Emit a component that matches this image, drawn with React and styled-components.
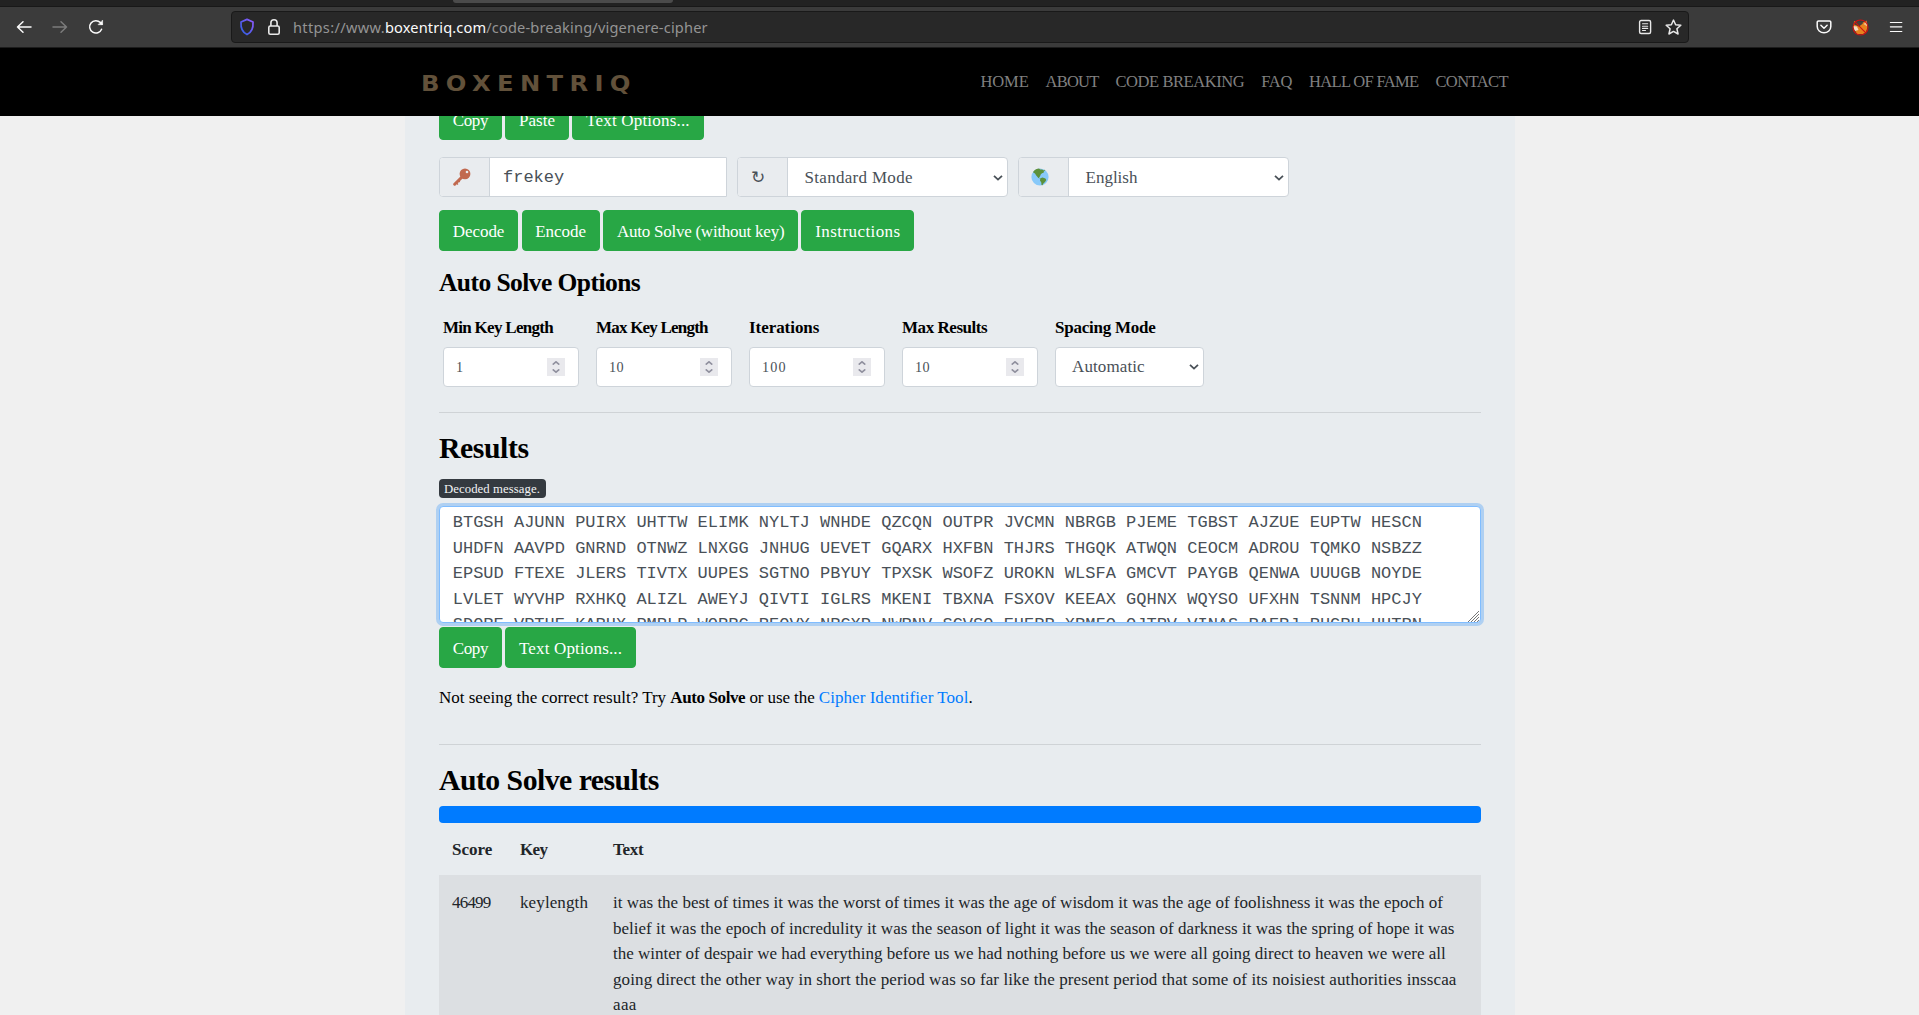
import React, { useLayoutEffect, useRef, useState } from "react";
import styled, { createGlobalStyle } from "styled-components";

const serif = `"Liberation Serif", "Times New Roman", serif`;
const mono = `"Liberation Mono", monospace`;

const Global = createGlobalStyle`
  * { box-sizing: border-box; }
  html, body { margin: 0; height: 1015px; overflow: hidden; background: #f0f0f0; }
  body { font-family: ${serif}; font-size: 17px; line-height: 25.5px; color: #000; }
  svg { display: block; flex: none; }
`;

/* Text tracked so that it fills a given width */
const FitText = styled.span`
  display: inline-block;
  white-space: pre;
`;
function Fit({ w, children }) {
  const ref = useRef(null);
  const [tracking, setTracking] = useState(0);
  useLayoutEffect(() => {
    const el = ref.current;
    el.style.letterSpacing = "0px";
    const natural = el.offsetWidth;
    const next = (w - natural) / String(children).length;
    el.style.letterSpacing = `${next}px`;
    setTracking(next);
  }, [w, children]);
  return <FitText ref={ref} style={{ letterSpacing: `${tracking}px` }}>{children}</FitText>;
}

/* ---------- browser chrome ---------- */
const Page = styled.div`
  display: flex;
  flex-direction: column;
  height: 1015px;
  overflow: hidden;
`;
const TabStrip = styled.div`
  height: 7px;
  background: #222;
  border-bottom: 1px solid #181818;
  padding-left: 453px;
  flex: none;
`;
const ActiveTab = styled.div`
  width: 220px;
  height: 3px;
  background: #4b4b4b;
  border-radius: 0 0 4px 4px;
`;
const Toolbar = styled.div`
  display: flex;
  align-items: center;
  height: 41px;
  flex: none;
  background: #3b3b3b;
  border-bottom: 1px solid #1c1c1c;
`;
const HistoryButtons = styled.div`
  display: flex;
  gap: 20px;
  width: 231px;
  padding-left: 16px;
`;
const UrlBar = styled.div`
  display: flex;
  align-items: center;
  width: 1458px;
  height: 32px;
  padding: 0 6px 0 7px;
  background: #282828;
  border: 1px solid #191919;
  border-radius: 4px;
`;
const Url = styled.div`
  flex: 1;
  margin-left: 12px;
  font: 14.6px/20px "Noto Sans", sans-serif;
  color: #949494;
  white-space: nowrap;
`;
const Host = styled.span`
  color: #fbfbfb;
`;
const UrlIcons = styled.div`
  display: flex;
  gap: 12px;
`;
const LockWrap = styled.div`
  margin-left: 12px;
`;
const ToolIcons = styled.div`
  display: flex;
  align-items: center;
  gap: 20px;
  padding-left: 127px;
`;

/* ---------- site header ---------- */
const Header = styled.header`
  display: flex;
  align-items: center;
  justify-content: space-between;
  height: 68px;
  flex: none;
  padding: 0 411px 0 421px;
  background: #000;
`;
const Logo = styled.div`
  width: 216px;
  padding-top: 3px;
  font: bold 21.3px/26px "DejaVu Sans", sans-serif;
  color: #62513a;
  transform: scaleX(1.14);
  transform-origin: left;
`;
const Nav = styled.nav`
  display: flex;
  gap: 17px;
  color: #808080;
  font-size: 16.5px;
`;

/* ---------- content ---------- */
const Viewport = styled.div`
  flex: 1;
  min-height: 0;
  overflow: hidden;
`;
const Panel = styled.main`
  display: flow-root;
  width: 1110px;
  height: 899px;
  margin-left: 405px;
  padding: 0 34px;
  background: #e8ecef;
`;
const ButtonRow = styled.div`
  display: flex;
  gap: 3.4px;
  margin-top: ${(p) => p.$top}px;
`;
const Button = styled.button`
  height: 41px;
  padding: 1px 12.75px 0;
  border: 1px solid #28a745;
  border-radius: 4px;
  background: #28a745;
  color: #fff;
  font: 17px/25px ${serif};
`;
const Groups = styled.div`
  display: flex;
  gap: 10px;
  margin-top: 17px;
`;
const Group = styled.div`
  display: flex;
  width: ${(p) => p.$w}px;
  height: 40px;
  border: 1px solid #ced4da;
  border-radius: ${(p) => (p.$square ? "4px 0 0 4px" : "4px")};
  background: #fff;
  overflow: hidden;
  color: #495057;
`;
const Addon = styled.div`
  display: flex;
  align-items: center;
  width: 50px;
  padding-left: ${(p) => p.$pad || 13}px;
  background: #e9ecef;
  border-right: 1px solid #ced4da;
  font: 17px/24px "DejaVu Sans", sans-serif;
`;
const Field = styled.div`
  flex: 1;
  display: flex;
  align-items: center;
  justify-content: space-between;
  padding: ${(p) => (p.$mono ? "2px 12px 0 13px" : "2px 4px 0 16.5px")};
  font-family: ${(p) => (p.$mono ? mono : serif)};
`;
const Heading = styled.h3`
  margin: ${(p) => p.$top}px 0 0;
  font-size: ${(p) => (p.$small ? 25.5 : 29.75)}px;
  line-height: ${(p) => (p.$small ? 31 : 36)}px;
  font-weight: bold;
`;
const Options = styled.div`
  display: flex;
  gap: 17px;
  margin: 17px 0 0 4px;
`;
const Option = styled.div`
  width: ${(p) => p.$w}px;
`;
const Label = styled.div`
  height: 32px;
  font-weight: bold;
`;
const Control = styled.div`
  display: flex;
  align-items: center;
  justify-content: space-between;
  height: 40px;
  padding: ${(p) => (p.$select ? "0 4px 0 16px" : "0 13px 0 12px")};
  background: #fff;
  border: 1px solid #ced4da;
  border-radius: 4px;
  color: #495057;
  font-size: ${(p) => (p.$select ? 17 : 14.2)}px;
`;
const Digits = styled.span`
  padding-top: 1px;
`;
const Spinner = styled.div`
  display: flex;
  flex-direction: column;
  align-items: center;
  justify-content: center;
  gap: 4px;
  width: 18px;
  height: 18px;
  background: #e9e9ed;
`;
const Rule = styled.hr`
  height: 1px;
  margin: ${(p) => p.$top}px 0 0;
  border: 0;
  background: #cfd3d6;
`;
const Badge = styled.div`
  width: 107px;
  height: 19px;
  margin-top: 13px;
  padding-left: 5px;
  border-radius: 4px;
  background: #343a40;
  color: #f2f3f4;
  font-size: 12.75px;
  line-height: 20px;
`;
const Output = styled.div`
  position: relative;
  height: 117px;
  margin-top: 8px;
  padding: 3.2px 12.75px 0;
  border: 1px solid #80bdff;
  border-radius: 4px;
  box-shadow: 0 0 0 3px #afd0f2;
  background: #fff;
  color: #495057;
  font-family: ${mono};
  white-space: pre;
  overflow: hidden;
`;
const Grip = styled.svg`
  position: absolute;
  right: 1px;
  bottom: 0;
`;
const Hint = styled.p`
  height: 26px;
  margin: 17px 0 0;
  white-space: pre;
`;
const Link = styled.a`
  color: #007bff;
`;
const Progress = styled.div`
  height: 17px;
  margin-top: 8px;
  border-radius: 4px;
  background: #007bff;
`;
const Row = styled.div`
  display: grid;
  grid-template-columns: 68px 93px 1fr;
  padding: ${(p) => (p.$head ? "14px 13px 12.5px" : "15px 13px 60px")};
  background: ${(p) => (p.$head ? "transparent" : "#dcdfe2")};
  font-weight: ${(p) => (p.$head ? "bold" : "normal")};
  color: #212529;
`;
const Line = styled.div`
  height: 25.5px;
`;

/* ---------- icons ---------- */
const Icon = ({ children, size = 16, stroke = "#fbfbfb", width = 1.5 }) => (
  <svg width={size} height={size} viewBox="0 0 16 16" fill="none" stroke={stroke} strokeWidth={width} strokeLinecap="round" strokeLinejoin="round">
    {children}
  </svg>
);
const Chevron = () => (
  <svg width="10" height="6" viewBox="0 0 10 6" fill="none" stroke="#495057" strokeWidth="1.8">
    <path d="M1 0.8 5 4.6 9 0.8" />
  </svg>
);
const Arrows = () => (
  <Spinner>
    <svg width="8" height="4" fill="none" stroke="#8f8f9d" strokeWidth="1.6"><path d="M.7 3.6 4 .8 7.3 3.6" /></svg>
    <svg width="8" height="4" fill="none" stroke="#8f8f9d" strokeWidth="1.6"><path d="M.7 .4 4 3.2 7.3 .4" /></svg>
  </Spinner>
);
const KeyIcon = () => (
  <svg width="18" height="18" viewBox="0 0 18 18">
    <path d="M9 9 1.7 16.2" stroke="#c1694f" strokeWidth="3" strokeLinecap="round" />
    <path d="M3 14.6 5 16.4M5.3 12.6 6.8 14" stroke="#c1694f" strokeWidth="1.3" />
    <circle cx="12" cy="5.9" r="5.4" fill="#c1694f" />
    <circle cx="14" cy="4" r="1.3" fill="#e8ecef" />
  </svg>
);
const GlobeIcon = () => (
  <svg width="18" height="18" viewBox="0 0 18 18">
    <circle cx="9" cy="9" r="8.6" fill="#88c9f9" />
    <path d="M2.2 3.7C4 1.500 6 .7 8 .6l1.300 1L11 1.400l2 1.200-.2 2-1.800.7-1.300 1.300L9 8.400l-1 .8 1 1.400-1.600-.6L5.200 7.600 4 5.400 2.200 4.600z" fill="#5c913b" />
    <path d="M9.300 10.200l2.300-.6 2.800.9.9 1.600-1.300 1.800-1.400 1.400-1.200 1.900-.9-.3-.2-2.500-1.300-1.900z" fill="#5c913b" />
    <path d="M13 1.600l1.400.9-1 .8z" fill="#5c913b" />
  </svg>
);

const cipher = `BTGSH AJUNN PUIRX UHTTW ELIMK NYLTJ WNHDE QZCQN OUTPR JVCMN NBRGB PJEME TGBST AJZUE EUPTW HESCN
UHDFN AAVPD GNRND OTNWZ LNXGG JNHUG UEVET GQARX HXFBN THJRS THGQK ATWQN CEOCM ADROU TQMKO NSBZZ
EPSUD FTEXE JLERS TIVTX UUPES SGTNO PBYUY TPXSK WSOFZ UROKN WLSFA GMCVT PAYGB QENWA UUUGB NOYDE
LVLET WYVHP RXHKQ ALIZL AWEYJ QIVTI IGLRS MKENI TBXNA FSXOV KEEAX GQHNX WQYSO UFXHN TSNNM HPCJY
SDORE VPTHE KARHX PMRLP WORRC REOVY NRGXP NWRNV SGVSO EHERR XRMFO OJTRV VINAS RAERJ RHGRH HHTRN`;

const nav = [["HOME", 48.5], ["ABOUT", 53], ["CODE BREAKING", 128.5], ["FAQ", 31], ["HALL OF FAME", 109], ["CONTACT", 73]];
const numbers = [["Min Key Length", 110, "1", 6], ["Max Key Length", 112, "10", 15], ["Iterations", 70.5, "100", 24.5], ["Max Results", 85, "10", 15]];
const lines = [
  ["it was the best of times it was the worst of times it was the age of wisdom it was the age of foolishness it was the epoch of", 830],
  ["belief it was the epoch of incredulity it was the season of light it was the season of darkness it was the spring of hope it was", 841],
  ["the winter of despair we had everything before us we had nothing before us we were all going direct to heaven we were all", 832.5],
  ["going direct the other way in short the period was so far like the present period that some of its noisiest authorities insscaa", 843.5],
  ["aaa", 24],
];
const Buttons = ({ items, top }) => (
  <ButtonRow $top={top}>
    {items.map(([t, w]) => <Button key={t}><Fit w={w}>{t}</Fit></Button>)}
  </ButtonRow>
);

export default function App() {
  return (
    <Page>
      <Global />
      <TabStrip><ActiveTab /></TabStrip>
      <Toolbar>
        <HistoryButtons>
          <Icon><path d="M15 8H1.5M7 2.8 1.5 8 7 13.2" /></Icon>
          <Icon stroke="#7c7c7c"><path d="M1 8h13.5M9 2.8 14.5 8 9 13.2" /></Icon>
          <Icon><path d="M13.6 10.2A6.2 6.2 0 1 1 12.4 3.6L14 5.3" /><path d="M14.6 1.5v4.2h-4.2z" fill="#fbfbfb" strokeWidth="0.6" /></Icon>
        </HistoryButtons>
        <UrlBar>
          <svg width="16" height="18" viewBox="0 0 16 18" fill="none">
            <defs><linearGradient id="shield" x1="1" y1="0" x2="0" y2="1"><stop stopColor="#9059ff" /><stop offset="1" stopColor="#2a5fe0" /></linearGradient></defs>
            <path d="M8 1.4 14 4c.4 5.600-1 10.200-6 12.600C3 14.200 1.600 9.600 2 4z" stroke="url(#shield)" strokeWidth="1.7" strokeLinejoin="round" />
          </svg>
          <LockWrap>
            <svg width="14" height="18" viewBox="0 0 14 18" fill="none" stroke="#e8e8e8" strokeWidth="1.6">
              <rect x="1.800" y="8" width="10.400" height="8.200" rx="1.500" />
              <path d="M3.900 8V4.800a3.100 3.100 0 0 1 6.200 0V8" />
            </svg>
          </LockWrap>
          <Url>
            <Fit w={92}>https://www.</Fit><Host><Fit w={101.5}>boxentriq.com</Fit></Host><Fit w={222}>/code-breaking/vigenere-cipher</Fit>
          </Url>
          <UrlIcons>
            <Icon stroke="#e8e8e8" width={1.4}><rect x="2.600" y="1.500" width="11" height="13" rx="1.500" /><path d="M5.500 4.800h5.200M5.500 7.200h5.200M5.500 9.400h5.200M5.500 11.500h3" strokeWidth="1.1" /></Icon>
            <Icon size={17} stroke="#e8e8e8" width={1.4}><path d="M8 1l2 4.400 4.900.5-3.700 3.300 1.100 4.900L8 11.700l-4.300 2.400 1.100-4.900L1.100 5.900 6 5.400z" /></Icon>
          </UrlIcons>
        </UrlBar>
        <ToolIcons>
          <Icon><path d="M2.500 2h11a1.300 1.300 0 0 1 1.300 1.300V7.500a6.800 6.300 0 0 1-13.600 0V3.300A1.300 1.300 0 0 1 2.500 2z" /><path d="M4.900 6.300 8 9.200l3.100-2.900" /></Icon>
          <svg width="17" height="17" viewBox="0 0 17 17">
            <path d="M2 2 8.500 5 14.500 1.500 15.500 8 14 13 11 15H5L1.500 9z" fill="#e8821e" />
            <path d="M1 7l4 .5L6.500 11 3 12z" fill="#f3dcc6" />
            <path d="M3 2.500h5l3 2-4 3-5-2z" fill="#4a4038" />
            <path d="M11.500 5 15 2.500l.3 5z" fill="#f0c090" />
            <circle cx="8.500" cy="8.500" r="7.500" fill="none" stroke="#cf1111" strokeWidth="1.100" />
            <path d="M3.200 3.200l10.600 10.600" stroke="#cf1111" strokeWidth="1.100" />
          </svg>
          <Icon width={1.2}><path d="M1.400 3.500h11.400M1.400 7.800h11.400M1.400 12.500h11.400" /></Icon>
        </ToolIcons>
      </Toolbar>
      <Header>
        <Logo><Fit w={189}>BOXENTRIQ</Fit></Logo>
        <Nav>{nav.map(([t, w]) => <Fit key={t} w={w}>{t}</Fit>)}</Nav>
      </Header>
      <Viewport>
        <Panel>
          <Buttons top={-17} items={[["Copy", 35.5], ["Paste", 36.3], ["Text Options...", 103.9]]} />
          <Groups>
            <Group $w={288} $square><Addon><KeyIcon /></Addon><Field $mono>frekey</Field></Group>
            <Group $w={271}><Addon>↻</Addon><Field><Fit w={108}>Standard Mode</Fit><Chevron /></Field></Group>
            <Group $w={271}><Addon $pad={12}><GlobeIcon /></Addon><Field><Fit w={52}>English</Fit><Chevron /></Field></Group>
          </Groups>
          <Buttons top={13} items={[["Decode", 51.7], ["Encode", 50.8], ["Auto Solve (without key)", 167.1], ["Instructions", 85.1]]} />
          <Heading $small $top={16}><Fit w={201}>Auto Solve Options</Fit></Heading>
          <Options>
            {numbers.map(([label, w, value, vw]) => (
              <Option key={label} $w={136}>
                <Label><Fit w={w}>{label}</Fit></Label>
                <Control><Digits><Fit w={vw}>{value}</Fit></Digits><Arrows /></Control>
              </Option>
            ))}
            <Option $w={149}>
              <Label><Fit w={100}>Spacing Mode</Fit></Label>
              <Control $select><Fit w={73}>Automatic</Fit><Chevron /></Control>
            </Option>
          </Options>
          <Rule $top={25} />
          <Heading $top={17}><Fit w={90}>Results</Fit></Heading>
          <Badge><Fit w={96}>Decoded message.</Fit></Badge>
          <Output>
            {cipher}
            <Grip width="11" height="11" stroke="#777" strokeWidth="1"><path d="M0 11 11 0M3 11l8-8M6 11l5-5M9 11l2-2" /></Grip>
          </Output>
          <Buttons top={4} items={[["Copy", 35.5], ["Text Options...", 103.4]]} />
          <Hint>
            <Fit w={231}>{"Not seeing the correct result? Try "}</Fit><b><Fit w={75}>Auto Solve</Fit></b><Fit w={74}>{" or use the "}</Fit><Link><Fit w={150}>Cipher Identifier Tool</Fit></Link>.
          </Hint>
          <Rule $top={33} />
          <Heading $top={17}><Fit w={219.5}>Auto Solve results</Fit></Heading>
          <Progress />
          <Row $head>
            <Line><Fit w={40}>Score</Fit></Line>
            <Line><Fit w={27}>Key</Fit></Line>
            <Line><Fit w={31}>Text</Fit></Line>
          </Row>
          <Row>
            <Line><Fit w={39}>46499</Fit></Line>
            <Line><Fit w={68}>keylength</Fit></Line>
            <div>{lines.map(([t, w]) => <Line key={t}><Fit w={w}>{t}</Fit></Line>)}</div>
          </Row>
        </Panel>
      </Viewport>
    </Page>
  );
}
